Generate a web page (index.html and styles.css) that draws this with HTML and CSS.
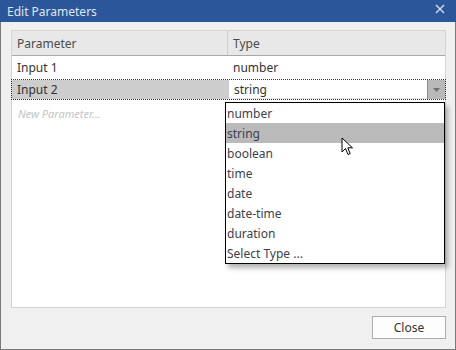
FILE: index.html
```html
<!DOCTYPE html>
<html>
<head>
    <title>Edit Parameters</title>
    <link rel="stylesheet" href="styles.css">
</head>
<body>
    <div class="window">
        <div class="title-bar">
            <span class="title">Edit Parameters</span>
            <svg class="close-x" width="10" height="10" viewBox="0 0 10 10">
                <path d="M1 1 L9 9 M9 1 L1 9" stroke="#d6dcea" stroke-width="1.4"/>
            </svg>
        </div>
        <div class="content">
            <!-- Parameter grid -->
            <div class="grid">
                <div class="grid-head">
                    <div class="cell col-name">Parameter</div>
                    <div class="cell col-type">Type</div>
                </div>
                <div class="grid-row">
                    <div class="cell col-name">Input 1</div>
                    <div class="cell col-type">number</div>
                </div>
                <div class="grid-row editing">
                    <div class="cell col-name">Input 2</div>
                    <div class="cell col-type type-edit">
                        <span class="edit-text">string</span>
                        <span class="drop-btn">
                            <svg width="7" height="4" viewBox="0 0 7 4"><path d="M0 0 H7 L3.5 4 Z" fill="#707070"/></svg>
                        </span>
                    </div>
                </div>
                <div class="grid-row new-row">
                    <div class="cell col-name placeholder">New Parameter...</div>
                </div>

                <ul class="drop-list">
                    <li>number</li>
                    <li class="hover">string</li>
                    <li>boolean</li>
                    <li>time</li>
                    <li>date</li>
                    <li>date-time</li>
                    <li>duration</li>
                    <li>Select Type ...</li>
                </ul>
                <svg class="cursor" width="14" height="20" viewBox="0 0 14 20">
                    <path d="M1 1 L1 15 L4.5 11.5 L7 17.5 L9.2 16.6 L6.8 10.8 L11.5 10.8 Z" fill="#fff" stroke="#000" stroke-width="1" stroke-linejoin="miter"/>
                </svg>
            </div>
            <div class="footer">
                <button class="btn">Close</button>
            </div>
        </div>
    </div>
</body>
</html>
```
FILE: styles.css
```css
/* Dialog */
body {
    margin: 0;
    font-family: 'Noto Sans', sans-serif;
    font-size: 12px;
}
.window {
    width: 456px;
    height: 350px;
    box-sizing: border-box;
    border: 1px solid #7a7a7a;
    border-top: none;
    background-color: #f0f0f0;
    display: flex;
    flex-direction: column;
}
.title-bar {
    height: 22px;
    margin: 0 -1px;
    background-color: #2b579a;
    display: flex;
    align-items: center;
    justify-content: space-between;
    padding: 0 11px 0 7px;
}
.title {
    color: #dfe6f1;
    font-size: 12px;
}
.close-x {
    margin-top: -4px;
}
.content {
    flex: 1;
    padding: 8px 9px 10px 10px;
    display: flex;
    flex-direction: column;
}
.grid {
    position: relative;
    height: 278px;
    box-sizing: border-box;
    border: 1px solid #d4d4d4;
    background-color: #fff;
    color: #333;
}
.grid-head {
    display: flex;
    height: 24px;
    background-color: #e8e8e8;
    border-bottom: 1px solid #a8a8a8;
    color: #4a4a4a;
}
.grid-head .col-name {
    border-right: 1px solid #cfcfcf;
}
.cell {
    display: flex;
    align-items: center;
    box-sizing: border-box;
    padding-left: 5px;
}
.col-name {
    width: 216px;
}
.col-type {
    flex: 1;
}
.grid-row {
    display: flex;
    height: 23px;
}
.grid-row .col-type {
    padding-left: 5px;
}
.editing {
    height: 19px;
    border: 1px dotted #333;
    margin: 0 -1px;
}
.editing .col-name {
    width: 217px;
    background-color: #cdcdcd;
    padding-left: 5px;
}
.type-edit {
    padding: 0 !important;
    background-color: #fff;
    align-items: stretch;
}
.edit-text {
    flex: 1;
    display: flex;
    align-items: center;
    padding-left: 5px;
    border-bottom: 1px solid #e4e4e4;
}
.drop-btn {
    width: 17px;
    background-color: #b9b9b9;
    border-left: 1px solid #8a8a8a;
    display: flex;
    align-items: center;
    justify-content: center;
}
.new-row {
    height: 26px;
}
.placeholder {
    font-style: italic;
    color: #c4c4c4;
    font-size: 11px;
    padding-left: 6px;
}

/* Type dropdown */
.drop-list {
    position: absolute;
    left: 213px;
    top: 71px;
    width: 220px;
    margin: 0;
    padding: 0;
    list-style: none;
    box-sizing: border-box;
    border: 1px solid #000;
    background-color: #fff;
    box-shadow: 3px 4px 5px rgba(0, 0, 0, 0.3);
    color: #3c4150;
}
.drop-list li {
    height: 20px;
    line-height: 21px;
    padding-left: 1px;
}
.drop-list li.hover {
    background-color: #bababa;
}
.cursor {
    position: absolute;
    left: 329px;
    top: 106px;
}

.footer {
    display: flex;
    justify-content: flex-end;
    padding-top: 8px;
}
.btn {
    width: 74px;
    height: 23px;
    font-family: 'Noto Sans', sans-serif;
    font-size: 12px;
    color: #333;
    background-color: #fdfdfd;
    border: 1px solid #adadad;
    padding: 0;
}
```
